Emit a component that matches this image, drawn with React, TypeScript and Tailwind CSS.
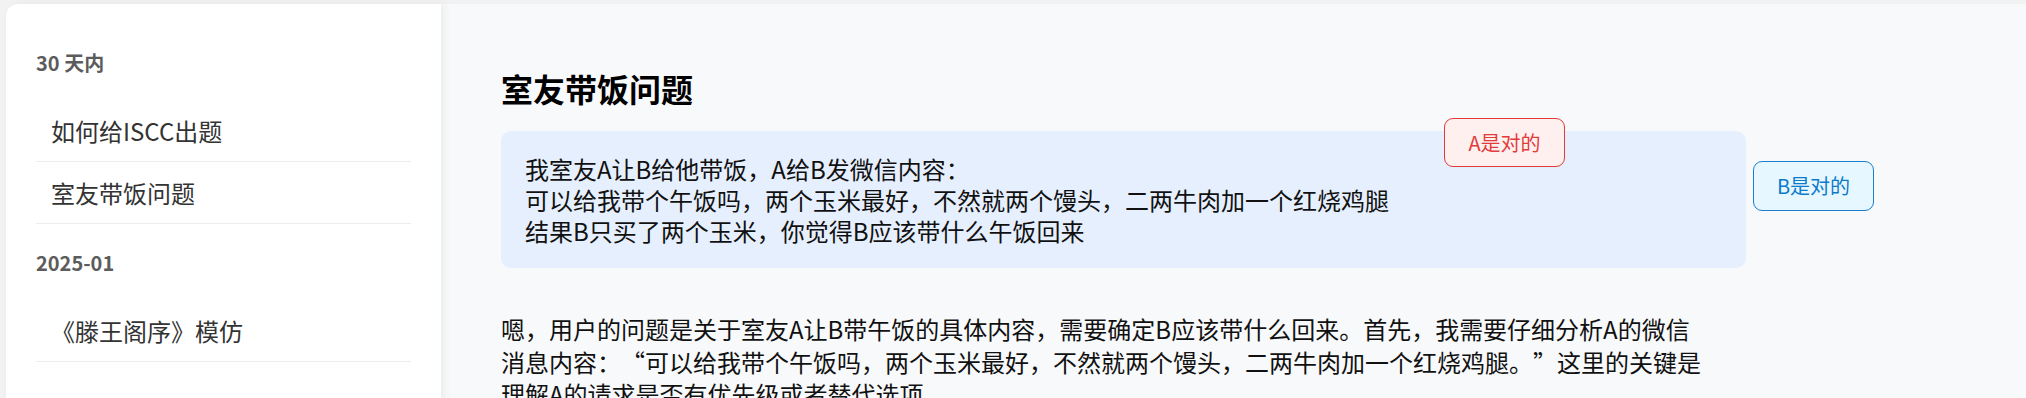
import React from "react";

const groups = [
  { label: "30 天内", items: ["如何给ISCC出题", "室友带饭问题"] },
  { label: "2025-01", items: ["《滕王阁序》模仿"] },
];

export default function App() {
  return (
    <div className="flex min-h-screen bg-[#f2f2f2] pt-[4px] pl-[6px] font-['Noto_Sans_CJK_SC','Noto_Sans',sans-serif] text-[#111]">
      {/* Sidebar */}
      <aside className="relative z-10 w-[435px] shrink-0 rounded-tl-[12px] bg-white px-[30px] pt-[44px] shadow-[3px_0_8px_rgba(0,0,0,0.06)]">
        {groups.map((g, gi) => (
          <div key={g.label} className={gi > 0 ? "mt-[24px]" : ""}>
            <div className="mb-[22px] text-[20px] leading-[30px] font-bold text-[#5c5c5c]">{g.label}</div>
            {g.items.map((item) => (
              <div
                key={item}
                className="flex h-[62px] items-center border-b border-[#ececec] pl-[15px] text-[24px] text-[#333]"
              >
                {item}
              </div>
            ))}
          </div>
        ))}
      </aside>

      {/* Main */}
      <main className="relative flex-1 bg-[#f8f9fb] pl-[60px] pt-[60px]">
        <h1 className="text-[32px] leading-[48px] font-bold text-black">室友带饭问题</h1>

        <div className="mt-[19px] w-[1245px] rounded-[10px] bg-[#e6effd] px-[24px] py-[22px] text-[24px] leading-[31px] text-[#111]">
          <p>我室友A让B给他带饭，A给B发微信内容：</p>
          <p>可以给我带个午饭吗，两个玉米最好，不然就两个馒头，二两牛肉加一个红烧鸡腿</p>
          <p>结果B只买了两个玉米，你觉得B应该带什么午饭回来</p>
        </div>

        <p className="mt-[45px] w-[1240px] text-[24px] leading-[32.5px] text-[#111]">
          嗯，用户的问题是关于室友A让B带午饭的具体内容，需要确定B应该带什么回来。首先，我需要仔细分析A的微信
          <br />
          消息内容：<span className="inline-block w-[24px] text-right">“</span>可以给我带个午饭吗，两个玉米最好，不然就两个馒头，二两牛肉加一个红烧鸡腿。<span className="inline-block w-[24px] text-left">”</span>这里的关键是
          <br />
          理解A的请求是否有优先级或者替代选项。
        </p>

        {/* floating answer buttons */}
        <button className="absolute left-[1003px] top-[114px] flex h-[49px] w-[121px] items-center justify-center rounded-[9px] border border-[#e03a3a] bg-[#fff0f0] text-[20px] text-[#e23b3b]">
          A是对的
        </button>
        <button className="absolute left-[1312px] top-[157px] flex h-[50px] w-[121px] items-center justify-center rounded-[9px] border border-[#1c7fce] bg-[#e6f7ff] text-[20px] text-[#0c7acb]">
          B是对的
        </button>
      </main>
    </div>
  );
}
